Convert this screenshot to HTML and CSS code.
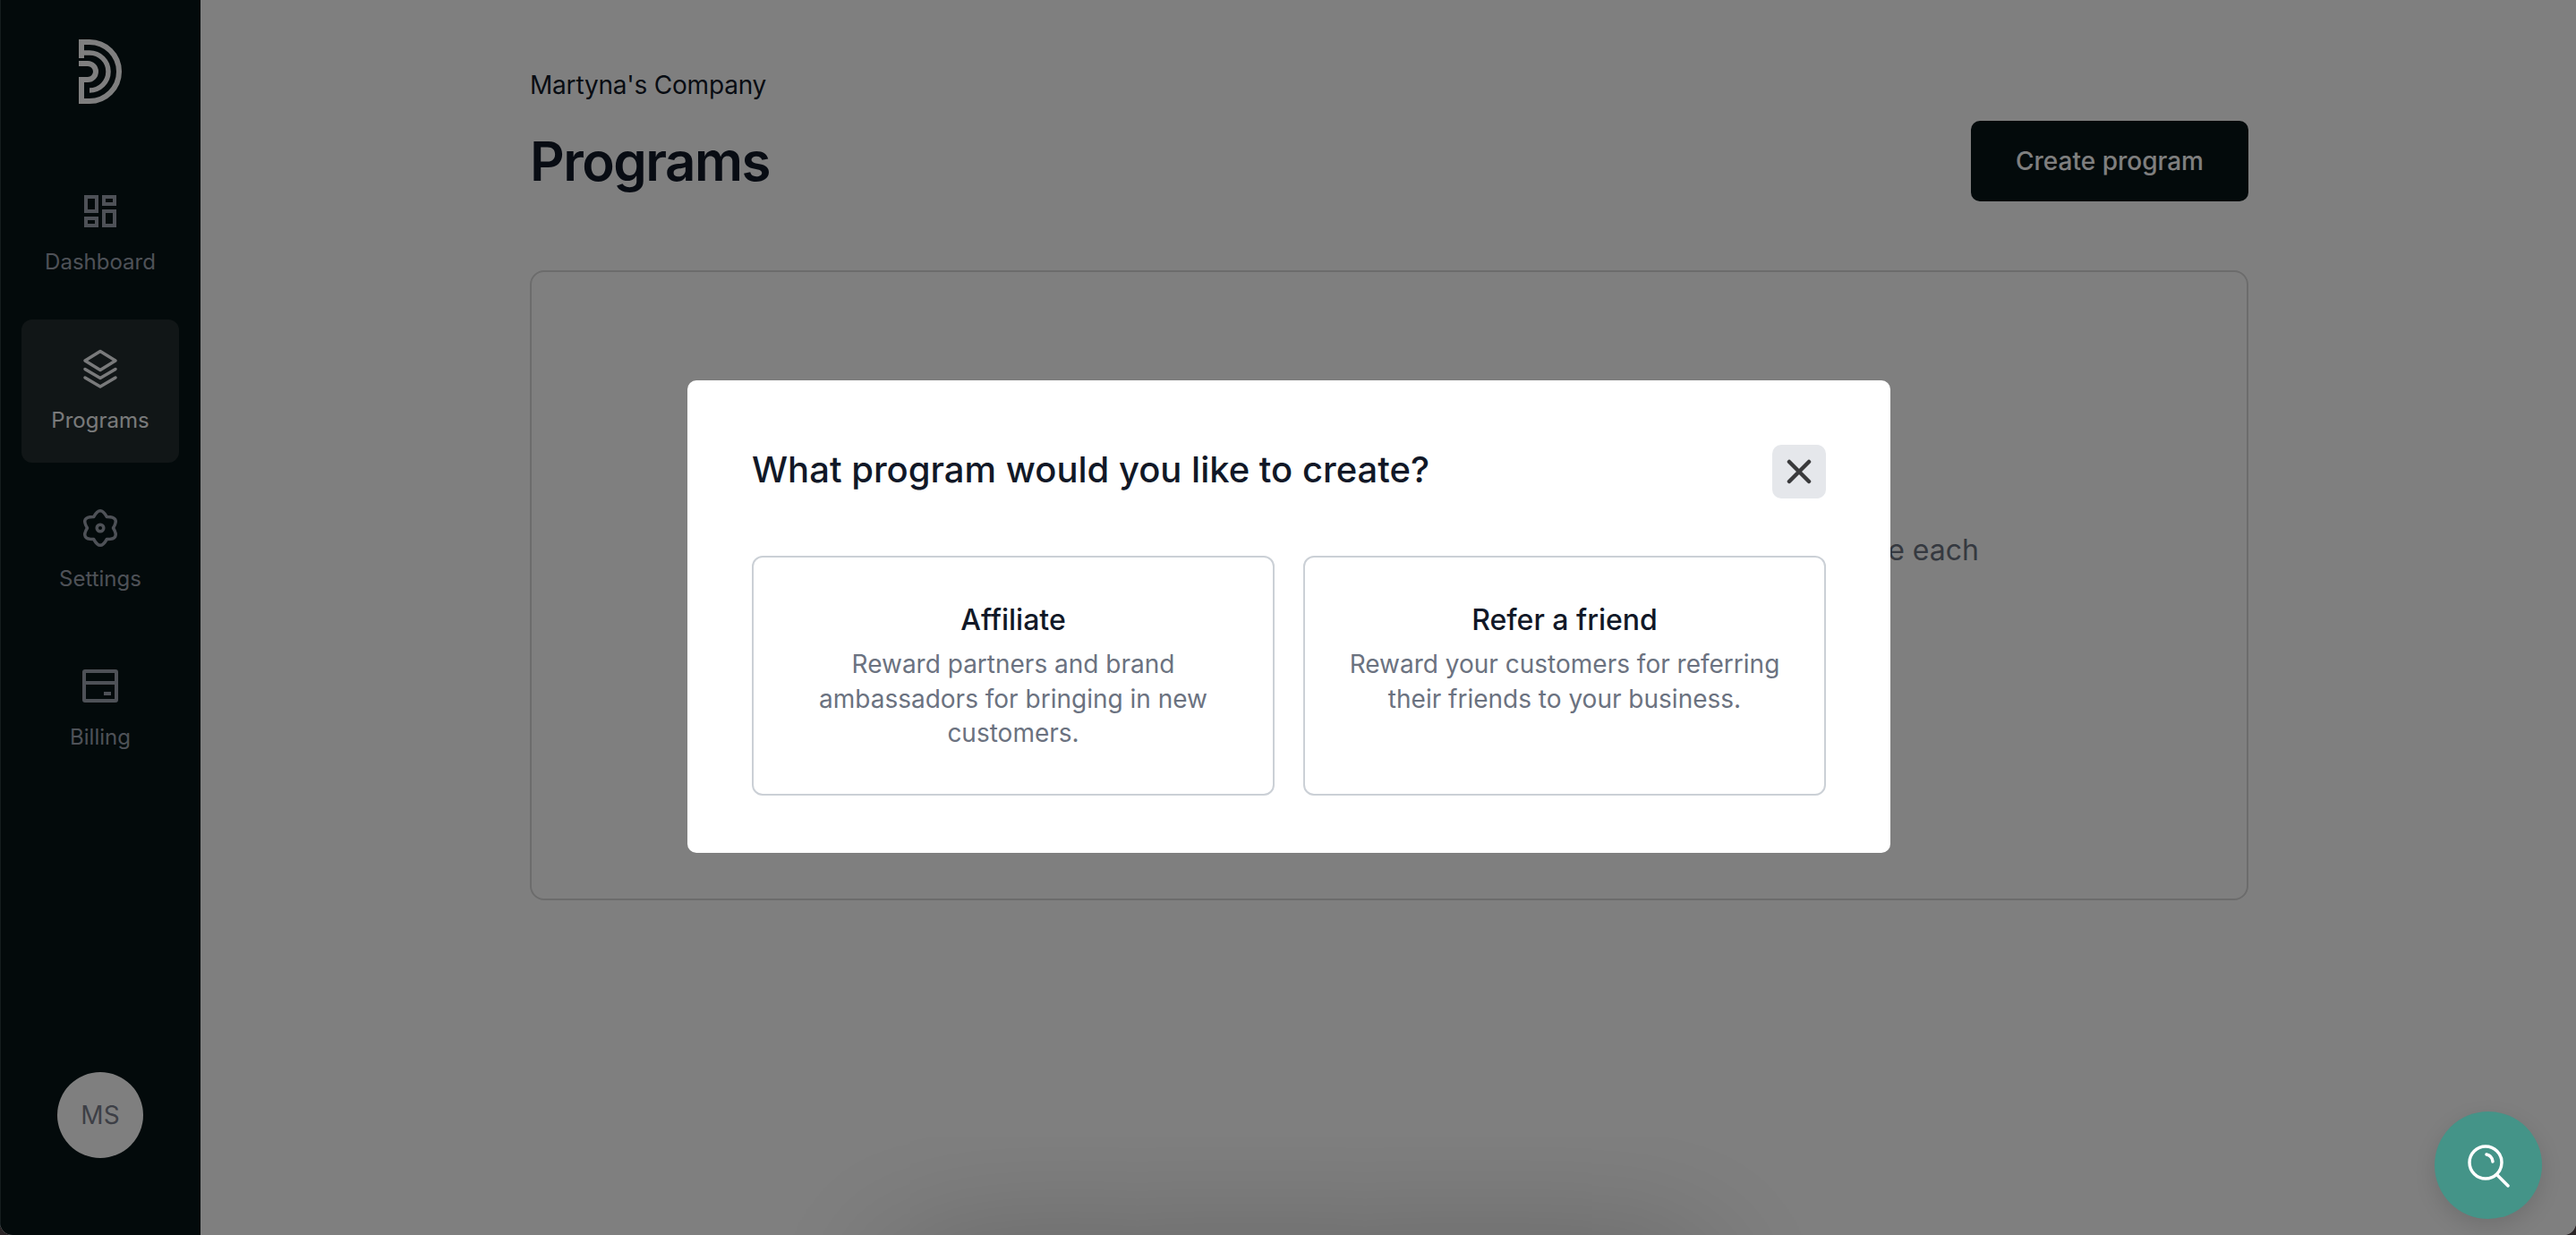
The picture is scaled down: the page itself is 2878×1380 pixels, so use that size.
FILE: index.html
```html
<!DOCTYPE html>
<html lang="en">
<head>
    <meta charset="UTF-8">
    <meta name="viewport" content="width=device-width, initial-scale=1.0">
    <title>Programs</title>
    <link rel="stylesheet" href="styles.css">
</head>
<body>
    <div class="window">
        <aside class="sidebar">
            <svg class="logo" width="48" height="72" viewBox="0 0 48 72" fill="none" stroke="currentColor">
                <path stroke-width="6" d="M3 21V3H12A33 33 0 0 1 12 69H3V43"/>
                <path stroke-width="5.5" d="M3 15H12A21 21 0 0 1 12 57"/>
                <path stroke-width="6" d="M0 27H10A9 9 0 0 1 10 45H0"/>
            </svg>
            <nav class="nav">
                <a class="nav-item">
                    <svg width="48" height="48" viewBox="0 0 24 24" fill="currentColor">
                        <path d="M19 5v2h-4V5h4M9 5v6H5V5h4m10 8v6h-4v-6h4M9 17v2H5v-2h4M21 3h-8v6h8V3zM11 3H3v10h8V3zm10 8h-8v10h8V11zm-10 4H3v6h8v-6z"/>
                    </svg>
                    <span>Dashboard</span>
                </a>
                <a class="nav-item active">
                    <svg width="48" height="48" viewBox="0 0 48 48" fill="none" stroke="currentColor" stroke-width="3.5" stroke-linejoin="round" stroke-linecap="round">
                        <path d="M24 3.500L41 14L24 24.500L7 14Z"/>
                        <path d="M7 23.500L24 33.500L41 23.500"/>
                        <path d="M7 33L24 43L41 33"/>
                    </svg>
                    <span>Programs</span>
                </a>
                <a class="nav-item">
                    <svg width="48" height="48" viewBox="0 0 48 48" fill="none" stroke="currentColor" stroke-width="3.500" stroke-linejoin="round">
                        <path d="M16.750 11.400Q24 -2 31.250 11.400Q46.500 11 38.500 24Q46.500 37 31.250 36.600Q24 50 16.750 36.600Q1.500 37 9.500 24Q1.500 11 16.750 11.400Z"/>
                        <circle cx="24" cy="24" r="3.800"/>
                    </svg>
                    <span>Settings</span>
                </a>
                <a class="nav-item">
                    <svg width="48" height="48" viewBox="0 0 48 48" fill="none" stroke="currentColor" stroke-width="4">
                        <rect x="6" y="7" width="36" height="33" rx="1"/>
                        <path d="M6 20H42"/>
                        <path d="M28 32H36"/>
                    </svg>
                    <span>Billing</span>
                </a>
            </nav>
            <div class="avatar">MS</div>
        </aside>

        <main class="main">
            <p class="company">Martyna's Company</p>
            <div class="page-head">
                <h1 class="page-title">Programs</h1>
                <button class="create-btn">Create program</button>
            </div>
            <section class="empty-card">
                <p class="empty-text">Start your first program and choose how much you would like to give each</p>
            </section>
        </main>

        <div class="page-shadow"></div>

        <div class="overlay">
            <div class="modal">
                <div class="modal-head">
                    <h2 class="modal-title">What program would you like to create?</h2>
                    <button class="close-btn" aria-label="Close">
                        <svg width="28" height="28" viewBox="0 0 28 28" fill="none" stroke="currentColor" stroke-width="4.500" stroke-linecap="round">
                            <path d="M3 3L25 25M25 3L3 25"/>
                        </svg>
                    </button>
                </div>
                <div class="options">
                    <div class="option">
                        <h3 class="option-title">Affiliate</h3>
                        <p class="option-text">Reward partners and brand ambassadors for bringing in new customers.</p>
                    </div>
                    <div class="option">
                        <h3 class="option-title">Refer a friend</h3>
                        <p class="option-text">Reward your customers for referring their friends to your business.</p>
                    </div>
                </div>
            </div>
        </div>

        <button class="help-btn" aria-label="Search help">
            <svg width="54" height="54" viewBox="0 0 54 54" fill="none" stroke="#ffffff" stroke-width="3.500" stroke-linecap="round">
                <circle cx="24" cy="24" r="18"/>
                <path d="M37 38L49 50"/>
                <path d="M25 15A9 9 0 0 1 32 23"/>
            </svg>
        </button>
    </div>
</body>
</html>
```

FILE: styles.css
```css
* {
    box-sizing: border-box;
}
body {
    margin: 0;
    background: #2a2426;
    font-family: Inter, "Noto Sans", sans-serif;
    color: #111827;
}
h1, h2, h3, p {
    margin: 0;
}
button {
    font-family: inherit;
    border: 0;
    padding: 0;
}
.window {
    position: relative;
    display: flex;
    height: 1380px;
    overflow: hidden;
    background: #ffffff;
    border-radius: 0 0 14px 14px;
}
.sidebar {
    width: 224px;
    flex-shrink: 0;
    display: flex;
    flex-direction: column;
    align-items: center;
    background: #061416;
    box-shadow: inset 1px 0 0 #2a3a3c;
    padding: 44px 0 86px;
}
.logo {
    color: #ffffff;
    flex-shrink: 0;
}
.nav {
    display: flex;
    flex-direction: column;
    gap: 17px;
    margin-top: 64px;
    width: 176px;
}
.nav-item {
    height: 160px;
    padding-top: 32px;
    display: flex;
    flex-direction: column;
    align-items: center;
    gap: 13px;
    border-radius: 12px;
    font-size: 24px;
    line-height: 40px;
    color: #9ca3af;
}
.nav-item.active {
    background: #222c2e;
    color: #f3f4f6;
}
.avatar {
    width: 96px;
    height: 96px;
    margin-top: auto;
    border-radius: 50%;
    background: #ffffff;
    color: #7b7f8c;
    display: flex;
    align-items: center;
    justify-content: center;
    font-size: 28px;
}
.main {
    flex: 1;
    padding: 72px 366px 0 368px;
}
.company {
    font-size: 28px;
    line-height: 46px;
    letter-spacing: -0.2px;
}
.page-head {
    display: flex;
    justify-content: space-between;
    align-items: center;
    margin-top: 17px;
}
.page-title {
    font-size: 60px;
    font-weight: 600;
    line-height: 72px;
    letter-spacing: -1.500px;
}
.create-btn {
    width: 310px;
    height: 90px;
    border-radius: 10px;
    background: #061416;
    color: #ffffff;
    font-size: 28px;
    font-weight: 500;
}
.empty-card {
    height: 704px;
    margin-top: 77px;
    padding-top: 289px;
    border: 2px solid #d8d8d8;
    border-radius: 16px;
}
.empty-text {
    width: 1318px;
    margin: 0 auto;
    text-align: right;
    white-space: nowrap;
    font-size: 32px;
    line-height: 44px;
    color: #6b7280;
}
.page-shadow {
    position: absolute;
    left: 1000px;
    top: 1410px;
    width: 900px;
    height: 100px;
    box-shadow: 0 0 160px rgba(0, 0, 0, 0.32);
}
.overlay {
    position: absolute;
    inset: 0;
    display: flex;
    align-items: center;
    justify-content: center;
    padding: 0 0 2px 2px;
    background: rgba(0, 0, 0, 0.5);
}
.modal {
    width: 1344px;
    height: 528px;
    padding: 72px 72px 64px;
    background: #ffffff;
    border-radius: 10px;
}
.modal-head {
    display: flex;
    justify-content: space-between;
    align-items: flex-start;
}
.modal-title {
    font-size: 40px;
    font-weight: 500;
    line-height: 56px;
}
.close-btn {
    width: 60px;
    height: 60px;
    display: flex;
    align-items: center;
    justify-content: center;
    background: #e5e7eb;
    border-radius: 10px;
    color: #3a3a3c;
}
.options {
    display: grid;
    grid-template-columns: 584px 584px;
    gap: 32px;
    margin-top: 64px;
}
.option {
    height: 268px;
    padding: 46px 49px 48px;
    border: 2px solid #cbd0d6;
    border-radius: 12px;
    text-align: center;
}
.option-title {
    font-size: 32px;
    font-weight: 500;
    line-height: 48px;
    margin-bottom: 6px;
}
.option-text {
    font-size: 28px;
    line-height: 38.500px;
    color: #6b7280;
}
.help-btn {
    position: absolute;
    right: 38px;
    bottom: 18px;
    width: 120px;
    height: 120px;
    display: flex;
    align-items: center;
    justify-content: center;
    border-radius: 50%;
    background: #449488;
    box-shadow: 0 8px 24px rgba(0, 0, 0, 0.12);
}
```
